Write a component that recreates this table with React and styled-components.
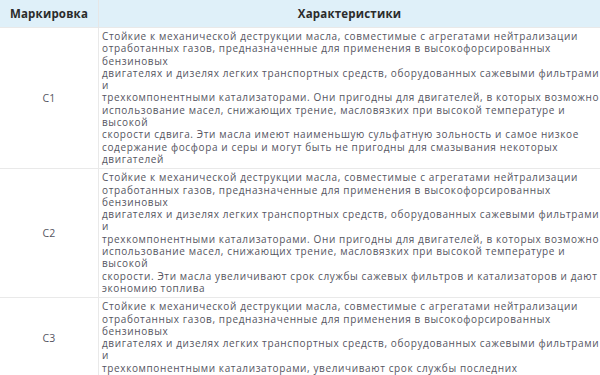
import styled, { createGlobalStyle } from "styled-components";

const Global = createGlobalStyle`
  html, body {
    margin: 0;
    padding: 0;
    background: #fff;
  }
  body {
    font-family: "Open Sans", "DejaVu Sans", sans-serif;
    overflow: hidden;
  }
`;

const rows = [
  {
    mark: "C1",
    lines: [
      "Стойкие к механической деструкции масла, совместимые с агрегатами нейтрализации",
      "отработанных газов, предназначенные для применения в высокофорсированных",
      "бензиновых",
      "двигателях и дизелях легких транспортных средств, оборудованных сажевыми фильтрами",
      "и",
      "трехкомпонентными катализаторами. Они пригодны для двигателей, в которых возможно",
      "использование масел, снижающих трение, масловязких при высокой температуре и",
      "высокой",
      "скорости сдвига. Эти масла имеют наименьшую сульфатную зольность и самое низкое",
      "содержание фосфора и серы и могут быть не пригодны для смазывания некоторых",
      "двигателей",
    ],
  },
  {
    mark: "C2",
    lines: [
      "Стойкие к механической деструкции масла, совместимые с агрегатами нейтрализации",
      "отработанных газов, предназначенные для применения в высокофорсированных",
      "бензиновых",
      "двигателях и дизелях легких транспортных средств, оборудованных сажевыми фильтрами",
      "и",
      "трехкомпонентными катализаторами. Они пригодны для двигателей, в которых возможно",
      "использование масел, снижающих трение, масловязких при высокой температуре и",
      "высокой",
      "скорости. Эти масла увеличивают срок службы сажевых фильтров и катализаторов и дают",
      "экономию топлива",
    ],
  },
  {
    mark: "C3",
    lines: [
      "Стойкие к механической деструкции масла, совместимые с агрегатами нейтрализации",
      "отработанных газов, предназначенные для применения в высокофорсированных",
      "бензиновых",
      "двигателях и дизелях легких транспортных средств, оборудованных сажевыми фильтрами",
      "и",
      "трехкомпонентными катализаторами, увеличивают срок службы последних",
    ],
  },
];

const Table = styled.table`
  width: 600px;
  border-collapse: collapse;
  table-layout: fixed;
  color: #55555f;
`;

const HeadCell = styled.th`
  background: #dff0f9;
  color: #2b2b2b;
  font-size: 11.5px;
  letter-spacing: 0.2px;
  font-weight: 700;
  height: 27px;
  padding: 0;
  text-align: center;
  border-right: 1px solid #e6e6e6;
  width: ${(p) => p.$w || "auto"};
  &:last-child {
    border-right: none;
  }
`;

const Row = styled.tr`
  border-top: 1px solid #e9e9e9;
`;

const MarkCell = styled.td`
  font-size: 10.5px;
  letter-spacing: 0.3px;
  text-align: center;
  vertical-align: middle;
  border-right: 1px solid #e9e9e9;
  padding: 0;
`;

const TextCell = styled.td`
  font-size: 10px;
  letter-spacing: 0.62px;
  line-height: 12.3px;
  padding: 2px 0 3px 3px;
  white-space: nowrap;
  vertical-align: top;
`;

const Line = styled.div`
  height: 12.3px;
`;

export default function App() {
  return (
    <>
      <Global />
      <Table>
        <thead>
          <tr>
            <HeadCell $w="98px">Маркировка</HeadCell>
            <HeadCell>Характеристики</HeadCell>
          </tr>
        </thead>
        <tbody>
          {rows.map((r) => (
            <Row key={r.mark}>
              <MarkCell>{r.mark}</MarkCell>
              <TextCell>
                {r.lines.map((l, i) => (
                  <Line key={i}>{l}</Line>
                ))}
              </TextCell>
            </Row>
          ))}
        </tbody>
      </Table>
    </>
  );
}
